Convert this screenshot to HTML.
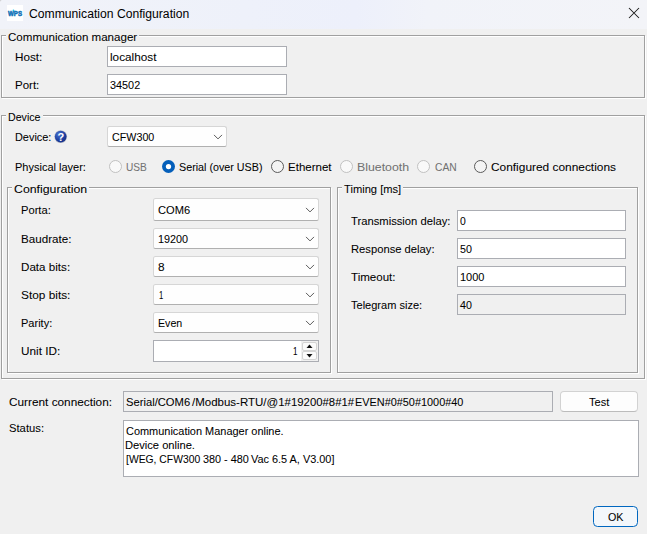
<!DOCTYPE html>
<html><head><meta charset="utf-8">
<style>
html,body{margin:0;padding:0;}
body{width:649px;height:536px;background:#fff;position:relative;overflow:hidden;font-family:"Liberation Sans",sans-serif;font-size:11.5px;color:#000;}
.win{position:absolute;left:0;top:0;width:647px;height:534px;background:#f0f0f0;overflow:hidden;}
.title{position:absolute;left:0;top:0;width:647px;height:29px;background:linear-gradient(90deg,#f1f3f9 0%,#eef1fa 38%,#edf0fb 55%,#f1f3f9 66%,#f3f4f8 100%);}
.t{position:absolute;white-space:pre;line-height:14px;transform-origin:0 0;-webkit-text-stroke:0.05px currentColor;}
.gg{position:absolute;box-sizing:border-box;border:1px solid #a0a0a0;}
.gw{position:absolute;box-sizing:border-box;border:1px solid #fff;}
.gap{position:absolute;height:2px;background:#f0f0f0;}
.in{position:absolute;box-sizing:border-box;border:1px solid #abadb3;background:#fff;}
.ro{background:#f0f0f0;}
.cb{position:absolute;box-sizing:border-box;border:1px solid #d6d6d6;border-bottom-color:#b0b0b0;border-radius:2.5px;background:#fefefe;}
.btn{position:absolute;box-sizing:border-box;border:1px solid #d2d2d2;border-bottom-color:#bcbcbc;border-radius:4px;background:#fdfdfd;}
svg{position:absolute;}
</style></head><body>
<div class="win">
<div class="title"></div>
<svg style="left:0;top:0" width="3" height="3"><path d="M0 0 H2 A2 2 0 0 0 0 2 Z" fill="#c4c4c4"/></svg>
<svg style="left:7px;top:5px" width="16" height="16"><rect width="16" height="16" fill="#fff"/><text x="8" y="10.6" text-anchor="middle" textLength="14" lengthAdjust="spacingAndGlyphs" font-family="Liberation Sans, sans-serif" font-weight="bold" font-size="7.2" fill="#1273b8" stroke="#1273b8" stroke-width="0.55">WPS</text><circle cx="6.45" cy="5.3" r="0.85" fill="#19c4e8"/></svg>
<svg style="left:628px;top:7px" width="12" height="12"><path d="M1 1 L11 11 M11 1 L1 11" stroke="#1a1a1a" stroke-width="1.05" fill="none"/></svg>

<div class="gw" style="left:2px;top:36px;width:644px;height:63px"></div><div class="gg" style="left:1px;top:35px;width:644px;height:63px"></div><div class="gap" style="left:6px;top:35px;width:133px"></div>
<div class="in" style="left:107px;top:46px;width:180px;height:21px"></div><div class="in" style="left:107px;top:74px;width:180px;height:21px"></div>

<div class="gw" style="left:2px;top:116px;width:644px;height:264px"></div><div class="gg" style="left:1px;top:115px;width:644px;height:264px"></div><div class="gap" style="left:6px;top:115px;width:37px"></div>
<svg style="left:54px;top:130px" width="14" height="14"><defs><radialGradient id="hg" cx="0.35" cy="0.3" r="0.8"><stop offset="0" stop-color="#4873cf"/><stop offset="0.6" stop-color="#1f40a2"/><stop offset="1" stop-color="#152d82"/></radialGradient></defs><circle cx="6.7" cy="6.6" r="6.4" fill="#b9bdc9"/><circle cx="6.7" cy="6.6" r="5.85" fill="url(#hg)"/><text x="6.8" y="10.6" text-anchor="middle" font-family="Liberation Sans, sans-serif" font-weight="bold" font-size="11" fill="#fff">?</text></svg>
<div class="cb" style="left:107px;top:126px;width:120px;height:21px"></div><svg style="left:213px;top:134.0px" width="10" height="6" viewBox="0 0 10 6"><path d="M1 0.9 L5 4.9 L9 0.9" stroke="#484848" stroke-width="0.9" fill="none"/></svg>
<svg style="left:109px;top:160px" width="13" height="13"><circle cx="6.5" cy="6.5" r="6" fill="#f9f9f9" stroke="#c0c0c0" stroke-width="1"/></svg><svg style="left:162px;top:160px" width="13" height="13"><circle cx="6.5" cy="6.5" r="6.5" fill="#045fba"/><circle cx="6.5" cy="6.55" r="2.65" fill="#fff"/></svg><svg style="left:271px;top:160px" width="13" height="13"><circle cx="6.5" cy="6.5" r="6" fill="#f4f4f4" stroke="#5a5a5a" stroke-width="1"/></svg><svg style="left:340px;top:160px" width="13" height="13"><circle cx="6.5" cy="6.5" r="6" fill="#f9f9f9" stroke="#c0c0c0" stroke-width="1"/></svg><svg style="left:417px;top:160px" width="13" height="13"><circle cx="6.5" cy="6.5" r="6" fill="#f9f9f9" stroke="#c0c0c0" stroke-width="1"/></svg><svg style="left:474px;top:160px" width="13" height="13"><circle cx="6.5" cy="6.5" r="6" fill="#f4f4f4" stroke="#5a5a5a" stroke-width="1"/></svg>

<div class="gw" style="left:8px;top:188px;width:324px;height:186px"></div><div class="gg" style="left:7px;top:187px;width:324px;height:186px"></div><div class="gap" style="left:12px;top:187px;width:77px"></div>
<div class="cb" style="left:153px;top:198px;width:166px;height:23px"></div><svg style="left:305px;top:207.0px" width="10" height="6" viewBox="0 0 10 6"><path d="M1 0.9 L5 4.9 L9 0.9" stroke="#484848" stroke-width="0.9" fill="none"/></svg><div class="cb" style="left:153px;top:228px;width:166px;height:21px"></div><svg style="left:305px;top:236.0px" width="10" height="6" viewBox="0 0 10 6"><path d="M1 0.9 L5 4.9 L9 0.9" stroke="#484848" stroke-width="0.9" fill="none"/></svg><div class="cb" style="left:153px;top:256px;width:166px;height:21px"></div><svg style="left:305px;top:264.0px" width="10" height="6" viewBox="0 0 10 6"><path d="M1 0.9 L5 4.9 L9 0.9" stroke="#484848" stroke-width="0.9" fill="none"/></svg><div class="cb" style="left:153px;top:284px;width:166px;height:21px"></div><svg style="left:305px;top:292.0px" width="10" height="6" viewBox="0 0 10 6"><path d="M1 0.9 L5 4.9 L9 0.9" stroke="#484848" stroke-width="0.9" fill="none"/></svg><div class="cb" style="left:153px;top:312px;width:166px;height:21px"></div><svg style="left:305px;top:320.0px" width="10" height="6" viewBox="0 0 10 6"><path d="M1 0.9 L5 4.9 L9 0.9" stroke="#484848" stroke-width="0.9" fill="none"/></svg>
<div class="in" style="left:153px;top:340px;width:166px;height:22px"></div>
<svg style="left:301px;top:341px" width="17" height="20"><rect width="17" height="20" fill="#f0f0f0"/><rect x="1.5" y="1.5" width="14" height="8" rx="1.5" fill="#fbfbfb" stroke="#d4d4d4"/><rect x="1.5" y="10.5" width="14" height="8" rx="1.5" fill="#fbfbfb" stroke="#d4d4d4"/><path d="M5.5 7 L8.5 3.6 L11.5 7 Z" fill="#111"/><path d="M5.5 13 L8.5 16.4 L11.5 13 Z" fill="#111"/></svg>

<div class="gw" style="left:338px;top:188px;width:301px;height:186px"></div><div class="gg" style="left:337px;top:187px;width:301px;height:186px"></div><div class="gap" style="left:342px;top:187px;width:61px"></div>
<div class="in" style="left:457px;top:210px;width:169px;height:21px"></div><div class="in" style="left:457px;top:238px;width:169px;height:21px"></div><div class="in" style="left:457px;top:266px;width:169px;height:21px"></div><div class="in ro" style="left:457px;top:294px;width:169px;height:21px"></div>

<div class="in ro" style="left:123px;top:391px;width:430px;height:21px"></div>
<div class="btn" style="left:560px;top:391px;width:78px;height:21px"></div>
<div class="in" style="left:123px;top:420px;width:516px;height:57px"></div>
<div class="btn" style="left:593px;top:506px;width:45px;height:21px;border:1.5px solid #0067c0;background:#f3f7fb;border-radius:4.5px"></div>
<div class="t" style="left:29.29px;top:7px;transform:scaleX(1.0137);font-size:12px;-webkit-text-stroke:0;">Communication Configuration</div>
<div class="t" style="left:7.94px;top:30px;transform:scaleX(1.0055);">Communication manager</div>
<div class="t" style="left:14.67px;top:50px;transform:scaleX(1.0156);">Host:</div>
<div class="t" style="left:14.71px;top:78px;transform:scaleX(1.0008);">Port:</div>
<div class="t" style="left:109.62px;top:50px;transform:scaleX(1.0233);">localhost</div>
<div class="t" style="left:109.93px;top:78px;transform:scaleX(0.9433);">34502</div>
<div class="t" style="left:7.68px;top:110px;transform:scaleX(0.9235);">Device</div>
<div class="t" style="left:14.90px;top:130px;transform:scaleX(0.9476);">Device:</div>
<div class="t" style="left:111.93px;top:130px;transform:scaleX(0.9324);">CFW300</div>
<div class="t" style="left:14.54px;top:160px;transform:scaleX(0.9566);">Physical layer:</div>
<div class="t" style="left:126.28px;top:160px;transform:scaleX(0.8805);color:#727272;">USB</div>
<div class="t" style="left:178.53px;top:160px;transform:scaleX(0.9331);">Serial (over USB)</div>
<div class="t" style="left:287.88px;top:160px;transform:scaleX(1.0022);">Ethernet</div>
<div class="t" style="left:357.23px;top:160px;transform:scaleX(1.0723);color:#727272;">Bluetooth</div>
<div class="t" style="left:434.57px;top:160px;transform:scaleX(0.8934);color:#727272;">CAN</div>
<div class="t" style="left:490.62px;top:160px;transform:scaleX(1.0342);">Configured connections</div>
<div class="t" style="left:13.73px;top:182px;transform:scaleX(1.0701);">Configuration</div>
<div class="t" style="left:21.12px;top:203px;transform:scaleX(0.9698);">Porta:</div>
<div class="t" style="left:20.99px;top:232px;transform:scaleX(1.0104);">Baudrate:</div>
<div class="t" style="left:21.49px;top:260px;transform:scaleX(1.0111);">Data bits:</div>
<div class="t" style="left:20.97px;top:288px;transform:scaleX(1.0304);">Stop bits:</div>
<div class="t" style="left:21.22px;top:316px;transform:scaleX(0.9578);">Parity:</div>
<div class="t" style="left:21.26px;top:344px;transform:scaleX(1.0225);">Unit ID:</div>
<div class="t" style="left:157.61px;top:203px;transform:scaleX(0.9688);">COM6</div>
<div class="t" style="left:157.94px;top:232px;transform:scaleX(0.9390);">19200</div>
<div class="t" style="left:158.09px;top:260px;transform:scaleX(1.0305);">8</div>
<div class="t" style="left:158.65px;top:288px;transform:scaleX(0.6643);">1</div>
<div class="t" style="left:157.58px;top:316px;transform:scaleX(0.9265);">Even</div>
<div class="t" style="left:293.20px;top:344px;transform:scaleX(0.7000);">1</div>
<div class="t" style="left:343.50px;top:182px;transform:scaleX(0.9697);">Timing [ms]</div>
<div class="t" style="left:351.15px;top:214px;transform:scaleX(0.9766);">Transmission delay:</div>
<div class="t" style="left:351.01px;top:242px;transform:scaleX(0.9746);">Response delay:</div>
<div class="t" style="left:351.05px;top:270px;transform:scaleX(1.0049);">Timeout:</div>
<div class="t" style="left:351.20px;top:298px;transform:scaleX(0.9589);">Telegram size:</div>
<div class="t" style="left:459.93px;top:214px;transform:scaleX(0.9011);">0</div>
<div class="t" style="left:460.25px;top:242px;transform:scaleX(0.9304);">50</div>
<div class="t" style="left:460.30px;top:270px;transform:scaleX(0.9570);">1000</div>
<div class="t" style="left:460.44px;top:298px;transform:scaleX(0.9269);">40</div>
<div class="t" style="left:8.67px;top:395px;transform:scaleX(1.0263);">Current connection:</div>
<div class="t" style="left:8.67px;top:421px;transform:scaleX(0.9778);">Status:</div>
<div class="t" style="left:589.00px;top:395px;transform:scaleX(0.9619);">Test</div>
<div class="t" style="left:608.28px;top:510px;transform:scaleX(0.9322);">OK</div>
<div class="t" style="left:125.60px;top:424px;transform:scaleX(0.9518);">Communication Manager online.</div>
<div class="t" style="left:125.03px;top:438px;transform:scaleX(0.9686);">Device online.</div>
<div class="t" style="left:125.70px;top:452px;transform:scaleX(0.9003);">[WEG, CFW300 </div>
<div class="t" style="left:202.57px;top:452px;transform:scaleX(0.9429);">380 - 480 </div>
<div class="t" style="left:250.98px;top:452px;transform:scaleX(0.9482);">Vac 6.5 A, V3.00]</div>
<div class="t" style="left:126.16px;top:395px;transform:scaleX(0.9742);">Serial/COM6 </div>
<div class="t" style="left:191.70px;top:395px;transform:scaleX(0.9990);">/Modbus-RTU/@1#</div>
<div class="t" style="left:290.81px;top:395px;transform:scaleX(0.9857);">19200#8#1#</div>
<div class="t" style="left:354.75px;top:395px;transform:scaleX(0.9468);">EVEN#0#50#1000#40</div>
</div>
</body></html>
